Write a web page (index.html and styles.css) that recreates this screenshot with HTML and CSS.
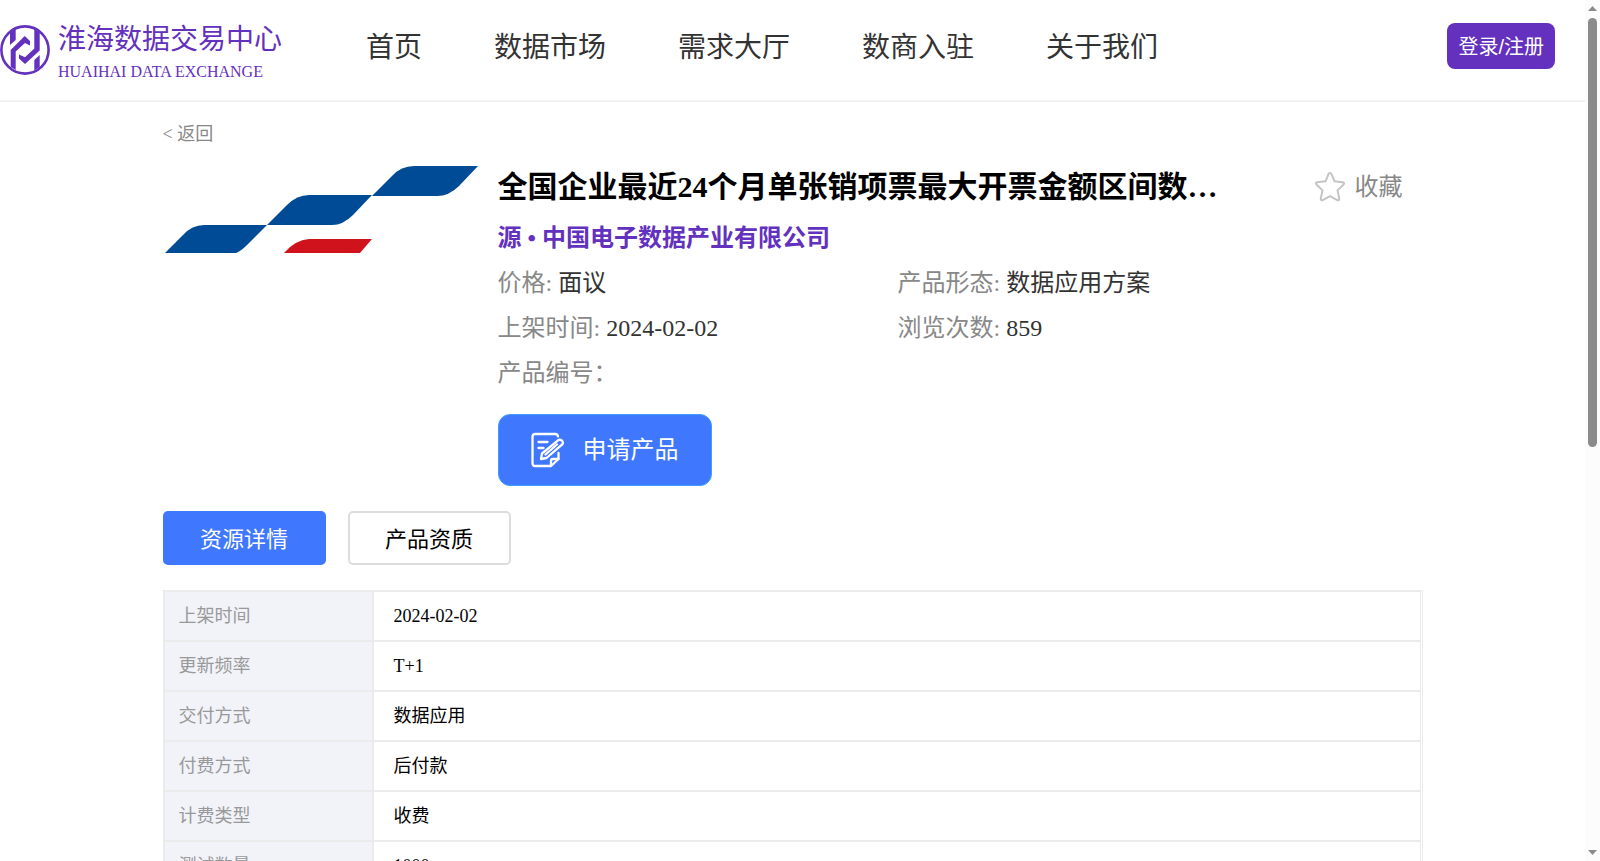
FILE: index.html
```
<!DOCTYPE html>
<html lang="zh-CN">

<head>
    <meta charset="UTF-8">
    <meta name="viewport" content="width=device-width, initial-scale=1.0">
    <title>淮海数据交易中心</title>
    <link rel="stylesheet" href="styles.css">
</head>

<body>
    <div class="page">
        <header class="header">
            <a class="logo" href="#">
                <svg class="logo-mark" viewBox="0 0 50 50" aria-hidden="true">
                    <circle cx="25" cy="25" r="23.6" fill="none" stroke="#6331bd" stroke-width="2.6" />
                    <path fill="#6331bd" d="M10 8 L15.7 4 V15 L10 20 Z" />
                    <path fill="#6331bd" d="M10.7 25 L24.7 11 L30 16 V20.5 L25 18 L15.7 26.5 V45 L10.7 42 Z" />
                    <path fill="#6331bd" d="M34.3 4 L39.7 8 V25.5 L25 39 L19 33.5 V29.5 L25 32.3 L34.3 23.5 Z" />
                    <path fill="#6331bd" d="M39.7 30 V42 L34.3 45.5 V35 Z" />
                </svg>
                <span class="logo-text">
                    <span class="logo-name">淮海数据交易中心</span>
                    <span class="logo-en">HUAIHAI DATA EXCHANGE</span>
                </span>
            </a>
            <nav class="nav">
                <a href="#">首页</a>
                <a href="#">数据市场</a>
                <a href="#">需求大厅</a>
                <a href="#">数商入驻</a>
                <a href="#">关于我们</a>
            </nav>
            <button class="login-btn" type="button">登录/注册</button>
        </header>

        <main class="container">
            <a class="back" href="#">&lt; 返回</a>

            <section class="product">
                <svg class="product-img" viewBox="0 0 315 90" role="img" aria-label="中国电子">
                    <path fill="#004b96" d="M209 30 L229 10 Q238 0 251 0 H315 L296 20 Q286 30 274 30 Z" />
                    <path fill="#004b96" d="M104 59 L124 39 Q134 29 146 29 H209 L190 49 Q180 59 169 59 Z" />
                    <path fill="#004b96" d="M2 87 L20 69 Q29 59 41 59 H104 L84 79 Q78 85 73 87 Z" />
                    <path fill="#cf121b" d="M121 87 Q132 74 146 73 H209 L197 87 Z" />
                </svg>
                <div class="product-info">
                    <div class="title-row">
                        <h1 class="title">全国企业最近24个月单张销项票最大开票金额区间数…</h1>
                        <button class="collect" type="button">
                            <svg class="collect-icon" viewBox="0 0 30 30" aria-hidden="true">
                                <path fill="none" stroke="#c4c4c4" stroke-width="2" stroke-linejoin="round" d="M13.6 1.9 Q15 0.2 16.4 1.9 L19.5 9.3 L27.7 10.2 Q29.8 10.8 28.6 12.5 L22.5 18.4 L24.3 26.6 Q24.3 28.8 22.3 28.2 L15 24.2 L7.7 28.2 Q5.7 28.8 5.7 26.6 L7.5 18.4 L1.4 12.5 Q0.2 10.8 2.3 10.2 L10.5 9.3 Z" />
                            </svg>
                            收藏
                        </button>
                    </div>
                    <h2 class="company">源 • 中国电子数据产业有限公司</h2>
                    <dl class="meta">
                        <div><dt>价格:</dt> <dd>面议</dd></div>
                        <div><dt>产品形态:</dt> <dd>数据应用方案</dd></div>
                        <div><dt>上架时间:</dt> <dd>2024-02-02</dd></div>
                        <div><dt>浏览次数:</dt> <dd>859</dd></div>
                        <div><dt>产品编号：</dt> <dd></dd></div>
                    </dl>
                    <button class="apply-btn" type="button">
                        <svg class="apply-icon" viewBox="0 0 34 36" fill="none" stroke="#fff" stroke-width="2.3" stroke-linecap="round" stroke-linejoin="round" aria-hidden="true">
                            <path d="M27 4.5 Q27 2 24 2 H4 Q1.5 2 1.5 5 V31 Q1.5 34 4 34 H20 L27.5 27 V21" />
                            <path d="M20 34 V29 Q20 27 22 27 H27.5" />
                            <path d="M7.5 10 H16.5 M7.5 16 H12.5" />
                            <path d="M10 27 L11 21.5 L27 8.3 Q29 7 31 8.6 Q32.8 11 31 12.6 L15.5 26 Z M14.5 22.5 L26 12.5" />
                        </svg>
                        申请产品
                    </button>
                </div>
            </section>

            <div class="tabs">
                <button class="tab active" type="button">资源详情</button>
                <button class="tab" type="button">产品资质</button>
            </div>

            <div class="detail">
                <table class="detail-table">
                    <tr><th scope="row">上架时间</th><td>2024-02-02</td></tr>
                    <tr><th scope="row">更新频率</th><td>T+1</td></tr>
                    <tr><th scope="row">交付方式</th><td>数据应用</td></tr>
                    <tr><th scope="row">付费方式</th><td>后付款</td></tr>
                    <tr><th scope="row">计费类型</th><td>收费</td></tr>
                    <tr><th scope="row">测试数量</th><td>1000</td></tr>
                </table>
            </div>
        </main>
    </div>

    <div class="scrollbar" aria-hidden="true">
        <svg class="arrow" viewBox="0 0 9 5"><path d="M0 5 L4.5 0 L9 5 Z" /></svg>
        <div class="track">
            <div class="thumb"></div>
        </div>
        <svg class="arrow" viewBox="0 0 9 5"><path d="M0 0 L4.5 5 L9 0 Z" /></svg>
    </div>
</body>

</html>
```
FILE: styles.css
```
* {
    box-sizing: border-box;
}

body {
    display: flex;
    height: 100vh;
    margin: 0;
    font-family: "Liberation Serif", "Noto Sans CJK SC", serif;
    color: #000;
    background: #fff;
}

a {
    color: inherit;
    text-decoration: none;
}

button {
    font-family: inherit;
    cursor: pointer;
}

.page {
    flex: 1;
    min-width: 0;
    overflow-y: auto;
    scrollbar-width: none;
}

/* scrollbar */
.scrollbar {
    display: flex;
    flex-direction: column;
    align-items: center;
    gap: 7px;
    width: 15px;
    padding: 6px 0;
    background: #fcfcfc;
}

.arrow {
    flex: none;
    width: 9px;
    height: 5px;
    fill: #8b8b8b;
}

.track {
    flex: 1;
    width: 9px;
}

.thumb {
    height: 52%;
    border-radius: 5px;
    background: #8b8b8b;
}

/* header */
.header {
    display: flex;
    align-items: center;
    height: 102px;
    padding-right: 30px;
    padding-bottom: 8px;
    border-bottom: 2px solid #f2f2f2;
}

.logo {
    display: flex;
    align-items: center;
    gap: 8px;
    padding-top: 8px;
    color: #6331bd;
}

.logo-mark {
    width: 50px;
    height: 50px;
}

.logo-text {
    display: flex;
    flex-direction: column;
    padding-top: 4px;
}

.logo-name {
    font-size: 28px;
    line-height: 40px;
}

.logo-en {
    font-size: 16px;
    line-height: 24px;
}

.nav {
    display: flex;
    gap: 72px;
    margin-left: 84px;
    padding-top: 4px;
    font-size: 28px;
    line-height: 40px;
    color: #333;
}

.login-btn {
    margin-left: auto;
    height: 46px;
    padding: 0 11px 2px;
    border: none;
    border-radius: 8px;
    background: #6331bd;
    color: #fff;
    font-family: "Liberation Sans", "Noto Sans CJK SC", sans-serif;
    font-size: 20px;
}

/* product */
.container {
    max-width: 1260px;
    margin: 0 auto;
    padding: 20px 0 40px;
}

.back {
    display: block;
    font-size: 18px;
    line-height: 24px;
    color: #888;
}

.product {
    display: flex;
    gap: 20px;
    margin-top: 20px;
}

.product-img {
    flex: none;
    width: 315px;
    height: 90px;
}

.product-info {
    flex: 1;
    min-width: 0;
}

.title-row {
    display: flex;
    align-items: center;
    justify-content: space-between;
    padding-right: 20px;
}

.title {
    margin: 0;
    font-size: 30px;
    line-height: 42px;
    white-space: nowrap;
}

.collect {
    display: flex;
    align-items: center;
    gap: 10px;
    padding: 0;
    border: none;
    background: none;
    font-size: 24px;
    line-height: 30px;
    color: #888;
}

.collect-icon {
    width: 30px;
    height: 30px;
}

.company {
    margin: 8px 0 0;
    font-size: 24px;
    line-height: 45px;
    color: #6331bd;
}

.meta {
    display: grid;
    grid-template-columns: 400px 1fr;
    margin: 0;
    font-size: 24px;
    line-height: 45px;
}

.meta dt,
.meta dd {
    display: inline;
    margin: 0;
}

.meta dt {
    color: #888;
}

.meta dd {
    color: #333;
}

.apply-btn {
    display: flex;
    align-items: center;
    gap: 18px;
    height: 72px;
    margin-top: 18px;
    padding: 0 32px;
    border: 1px solid #409eff;
    border-radius: 12px;
    background: #3f77ff;
    color: #fff;
    font-size: 24px;
    line-height: 32px;
}

.apply-icon {
    width: 34px;
    height: 36px;
}

/* tabs */
.tabs {
    display: flex;
    gap: 22px;
    margin: 25px 0;
}

.tab {
    width: 163px;
    height: 54px;
    padding: 0 0 3px;
    border: 2px solid #ddd;
    border-radius: 5px;
    background: #fff;
    color: #000;
    font-size: 22px;
}

.tab.active {
    border-color: #3f77ff;
    background: #3f77ff;
    color: #fff;
}

/* detail table */
.detail {
    padding-right: 1px;
    border: 1px solid #ebebeb;
}

.detail-table {
    width: 100%;
    border-spacing: 0;
    font-size: 18px;
    line-height: 24px;
}

.detail-table th,
.detail-table td {
    height: 50px;
    padding: 0 20px;
    border: 1px solid #ebebeb;
    text-align: left;
    font-weight: normal;
}

.detail-table th {
    width: 209px;
    padding: 0 14px;
    background: #f2f3f9;
    color: #999;
}
```
